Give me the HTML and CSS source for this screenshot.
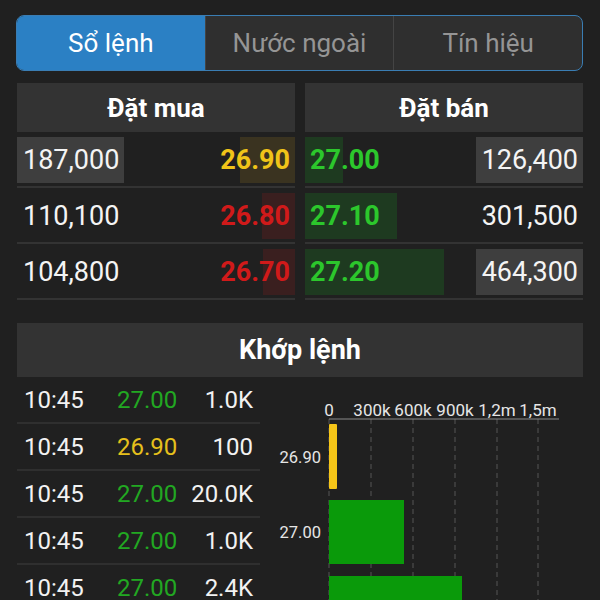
FILE: index.html
```html
<!DOCTYPE html>
<html lang="vi">
<head>
    <meta charset="UTF-8">
    <meta name="viewport" content="width=device-width, initial-scale=1.0">
    <title>Sổ lệnh</title>
    <link rel="stylesheet" href="styles.css">
</head>
<body>

    <div class="screen">
        <!-- Onglets -->
        <div class="tabs">
            <div class="tab active">Sổ lệnh</div>
            <div class="tab">Nước ngoài</div>
            <div class="tab">Tín hiệu</div>
        </div>

        <!-- Carnet d'ordres -->
        <div class="book">
            <div class="side buy">
                <div class="side-head">Đặt mua</div>
                <div class="book-row">
                    <span class="vol boxed">187,000</span>
                    <span class="price ref" style="--w:55px">26.90</span>
                </div>
                <div class="book-row">
                    <span class="vol">110,100</span>
                    <span class="price down" style="--w:33px">26.80</span>
                </div>
                <div class="book-row">
                    <span class="vol">104,800</span>
                    <span class="price down" style="--w:32px">26.70</span>
                </div>
            </div>

            <div class="side sell">
                <div class="side-head">Đặt bán</div>
                <div class="book-row">
                    <span class="price up" style="--w:38px">27.00</span>
                    <span class="vol boxed">126,400</span>
                </div>
                <div class="book-row">
                    <span class="price up" style="--w:92px">27.10</span>
                    <span class="vol">301,500</span>
                </div>
                <div class="book-row">
                    <span class="price up" style="--w:139px">27.20</span>
                    <span class="vol boxed">464,300</span>
                </div>
            </div>
        </div>

        <div class="match-head">Khớp lệnh</div>

        <div class="match">
            <div class="trades">
                <div class="trade"><span>10:45</span><span class="t-up">27.00</span><span class="qty">1.0K</span></div>
                <div class="trade"><span>10:45</span><span class="t-ref">26.90</span><span class="qty">100</span></div>
                <div class="trade"><span>10:45</span><span class="t-up">27.00</span><span class="qty">20.0K</span></div>
                <div class="trade"><span>10:45</span><span class="t-up">27.00</span><span class="qty">1.0K</span></div>
                <div class="trade"><span>10:45</span><span class="t-up">27.00</span><span class="qty">2.4K</span></div>
            </div>

            <!-- Volume par prix -->
            <svg class="chart" width="323" height="223" viewBox="0 0 323 223">
                <g class="grid">
                    <line x1="69" y1="42" x2="69" y2="223"/>
                    <line x1="111" y1="42" x2="111" y2="223"/>
                    <line x1="153" y1="42" x2="153" y2="223"/>
                    <line x1="195" y1="42" x2="195" y2="223"/>
                    <line x1="237" y1="42" x2="237" y2="223"/>
                    <line x1="278" y1="42" x2="278" y2="223"/>
                </g>
                <line class="axis" x1="69" y1="42" x2="299" y2="42"/>
                <g class="labels">
                    <text x="69" y="39" text-anchor="middle">0</text>
                    <text x="112" y="39" text-anchor="middle">300k</text>
                    <text x="153" y="39" text-anchor="middle">600k</text>
                    <text x="195" y="39" text-anchor="middle">900k</text>
                    <text x="237" y="39" text-anchor="middle">1,2m</text>
                    <text x="278" y="39" text-anchor="middle">1,5m</text>
                </g>
                <g class="labels prices">
                    <text x="61" y="86" text-anchor="end">26.90</text>
                    <text x="61" y="161" text-anchor="end">27.00</text>
                </g>
                <rect class="bar-ref" x="69" y="47" width="8" height="65" rx="1"/>
                <rect class="bar-up" x="69" y="123" width="75" height="64"/>
                <rect class="bar-up" x="69" y="199" width="133" height="64"/>
            </svg>
        </div>
    </div>

</body>
</html>
```

FILE: styles.css
```css
/* Fond sombre */
body {
    margin: 0;
    padding: 0;
    background: #202020;
    font-family: Roboto, "Noto Sans", sans-serif;
    color: #f2f2f2;
}

.screen {
    width: 600px;
    height: 600px;
    overflow: hidden;
    padding: 15px 17px 0 17px;
    box-sizing: border-box;
}

/* Onglets */
.tabs {
    display: flex;
    height: 56px;
    margin-left: -1px;
    border: 1.5px solid #3a7db3;
    border-radius: 8px;
    overflow: hidden;
    box-sizing: border-box;
    background: #2f2f2f;
}

.tab {
    flex: 1;
    display: flex;
    align-items: center;
    justify-content: center;
    font-size: 26px;
    color: #959595;
    border-left: 1px solid #444;
}

.tab:first-child {
    border-left: none;
}

.tab.active {
    background: #2b80c4;
    color: #fff;
}

/* Carnet */
.book {
    display: grid;
    grid-template-columns: 1fr 1fr;
    gap: 10px;
    margin-top: 12px;
}

.side-head {
    height: 49px;
    background: #333;
    display: flex;
    align-items: center;
    justify-content: center;
    font-size: 26px;
    font-weight: bold;
    color: #fff;
}

.book-row {
    display: flex;
    align-items: center;
    height: 52px;
    padding-top: 2px;
    border-bottom: 2px solid #333;
    font-size: 27px;
}

.vol {
    height: 46px;
    line-height: 46px;
    padding: 0 5px 0 6px;
    color: #f4f4f4;
}

.vol.boxed {
    background: #3e3e3e;
}

.price {
    flex: 1;
    height: 46px;
    line-height: 46px;
    font-weight: bold;
}

.buy .price {
    text-align: right;
    padding-right: 5px;
    background: linear-gradient(to left, var(--bar) var(--w), transparent var(--w));
}

.sell .price {
    padding-left: 5px;
    background: linear-gradient(to right, var(--bar) var(--w), transparent var(--w));
}

.price.ref {
    color: #f0c419;
    --bar: #3a3320;
}

.price.down {
    color: #d01a1a;
    --bar: #3a1f1f;
}

.price.up {
    color: #2cc72c;
    --bar: #1e3a20;
}

/* Khớp lệnh */
.match-head {
    margin-top: 23px;
    height: 54px;
    background: #333;
    display: flex;
    align-items: center;
    justify-content: center;
    font-size: 27px;
    font-weight: bold;
    color: #fff;
}

.match {
    display: flex;
}

.trades {
    width: 243px;
}

.trade {
    display: grid;
    grid-template-columns: 93px 1fr auto;
    align-items: center;
    height: 45px;
    padding: 0 7px;
    border-bottom: 2px solid #2f2f2f;
    font-size: 24px;
    color: #f2f2f2;
}

.t-up {
    color: #22a822;
}

.t-ref {
    color: #e6c01c;
}

.qty {
    text-align: right;
}

.chart {
    display: block;
}

.grid line {
    stroke: #555;
    stroke-width: 1;
    stroke-dasharray: 5 4;
}

.axis {
    stroke: #8a8a8a;
    stroke-width: 1;
}

.labels text {
    fill: #e6e6e6;
    font-family: Roboto, sans-serif;
    font-size: 17px;
}

.prices text {
    font-size: 16.5px;
}

.bar-ref {
    fill: #f5c518;
}

.bar-up {
    fill: #0a9a0a;
}
```
